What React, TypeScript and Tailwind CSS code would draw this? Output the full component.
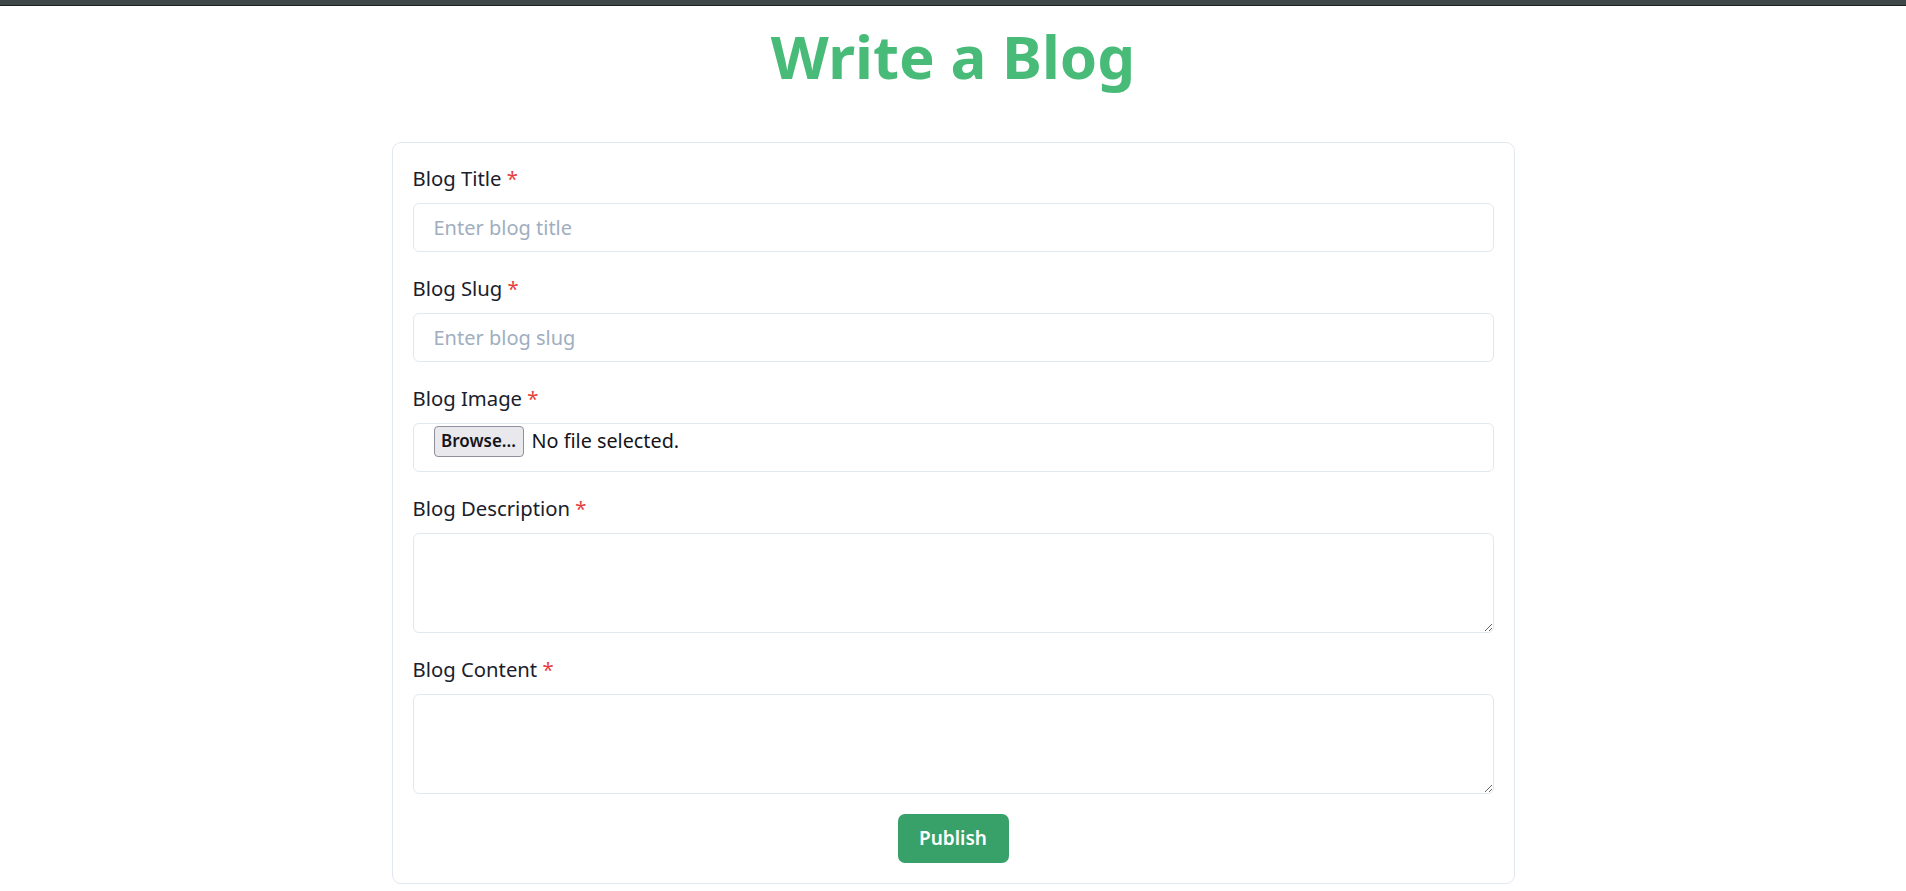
import { useState } from "react";

function Label({ text }: { text: string }) {
  return (
    <label className="block h-[31px] text-[20.3px] leading-[29px] text-[#1a202c]">
      {text} <span className="text-[#e53e3e]">*</span>
    </label>
  );
}

const inputClass =
  "mt-[8px] block w-full h-[49px] rounded-[6px] border border-[#e2e8f0] bg-white px-[20px] text-[20px] text-[#1a202c] placeholder:text-[#a0aec0] outline-none focus:border-[#cbd5e0]";

const areaClass =
  "mt-[8px] block w-full h-[100px] rounded-[6px] border border-[#e2e8f0] bg-white px-[20px] py-[8px] text-[20px] text-[#1a202c] outline-none focus:border-[#cbd5e0]";

export default function App() {
  const [fileName, setFileName] = useState<string | null>(null);

  return (
    <div className="min-h-screen bg-white font-['Noto_Sans',sans-serif]">
      <div className="h-[6px] bg-[#3f4749] border-b border-[#1c2021]" />

      <h1 className="mt-[20px] text-center text-[60px] leading-[60px] font-bold text-[#48bb78]">
        Write a Blog
      </h1>

      <form
        className="mx-auto mt-[56px] w-[1123px] rounded-[9px] border border-[#e2e8f0] bg-white px-[20px] pt-[21px] pb-[20px]"
        onSubmit={(e) => e.preventDefault()}
      >
        <div className="flex flex-col gap-[22px]">
          <div>
            <Label text="Blog Title" />
            <input name="title" placeholder="Enter blog title" className={inputClass} />
          </div>

          <div>
            <Label text="Blog Slug" />
            <input name="slug" placeholder="Enter blog slug" className={inputClass} />
          </div>

          <div>
            <Label text="Blog Image" />
            <label className="mt-[8px] flex h-[49px] w-full cursor-pointer items-start rounded-[6px] border border-[#e2e8f0] bg-white pl-[20px] pt-[2px]">
              <input
                type="file"
                accept="image/*"
                className="hidden"
                onChange={(e) => setFileName(e.target.files?.[0]?.name ?? null)}
              />
              <span className="flex items-center gap-[8px]">
                <span className="flex h-[31px] w-[90px] items-center justify-center rounded-[4px] border border-[#8f8f9d] bg-[#e9e9ed] pb-[1px] text-[17px] font-semibold text-[#15141a]">
                  Browse...
                </span>
                <span className="text-[19.8px] leading-[29px] pb-[2px] text-[#15141a]">
                  {fileName ?? "No file selected."}
                </span>
              </span>
            </label>
          </div>

          <div>
            <Label text="Blog Description" />
            <textarea name="description" className={areaClass} />
          </div>

          <div>
            <Label text="Blog Content" />
            <textarea name="content" className={areaClass} />
          </div>
        </div>

        <div className="mt-[20px] flex justify-center">
          <button
            type="submit"
            className="h-[49px] w-[111px] rounded-[7px] bg-[#38a169] text-[19px] font-semibold text-white hover:bg-[#2f855a]"
          >
            Publish
          </button>
        </div>
      </form>
    </div>
  );
}
